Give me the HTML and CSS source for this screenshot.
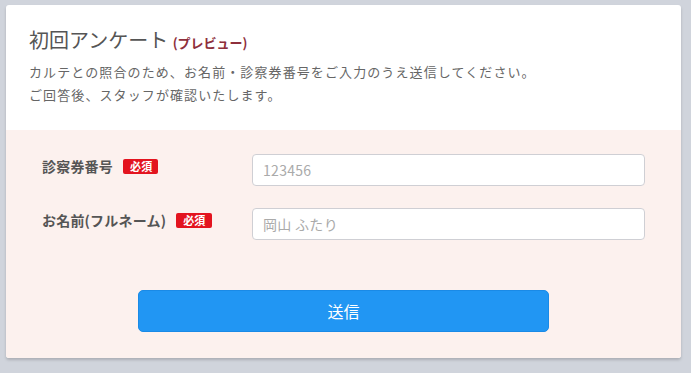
FILE: index.html
```html
<!DOCTYPE html>
<html lang="ja">
<head>
  <meta charset="UTF-8">
  <meta name="viewport" content="width=device-width, initial-scale=1.0">
  <title>初回アンケート</title>
  <link rel="stylesheet" href="styles.css">
</head>
<body>
  <div class="card">
    <div class="card-head">
      <h1 class="title">初回アンケート <span class="preview">(プレビュー)</span></h1>
      <p class="lead">カルテとの照合のため、お名前・診察券番号をご入力のうえ送信してください。<br>ご回答後、スタッフが確認いたします。</p>
    </div>
    <form class="card-form" onsubmit="return false;">
      <div class="row">
        <label class="label" for="card-no">診察券番号<span class="req">必須</span></label>
        <input class="input" id="card-no" type="text" placeholder="123456">
      </div>
      <div class="row">
        <label class="label" for="name">お名前(フルネーム)<span class="req">必須</span></label>
        <input class="input" id="name" type="text" placeholder="岡山 ふたり">
      </div>
      <div class="actions">
        <button class="submit" type="submit">送信</button>
      </div>
    </form>
  </div>
</body>
</html>
```

FILE: styles.css
```css
body {
  margin: 0;
  padding: 5px 10px 15px 6px;
  background: #d0d4dc;
  font-family: "Noto Sans CJK JP", "Noto Sans", sans-serif;
  color: #555;
}
.card {
  width: 675px;
  background: #fff;
  border-radius: 3px;
  overflow: hidden;
  box-shadow: 0 2px 3px rgba(0, 0, 0, 0.18);
}
.card-head {
  padding: 21px 23px 24px 23px;
}
.title {
  margin: 0;
  font-size: 20px;
  line-height: 28px;
  font-weight: 400;
  color: #555;
}
.preview {
  font-size: 13px;
  font-weight: 700;
  color: #8e2f3c;
}
.lead {
  margin: 3px 0 0;
  font-size: 13px;
  line-height: 23px;
  letter-spacing: 1.1px;
  color: #666;
}
.card-form {
  background: #fcf1ee;
  padding: 24px 36px 26px 36px;
}
.row {
  display: flex;
  align-items: flex-start;
  margin-bottom: 22px;
}
.label {
  width: 210px;
  flex: none;
  font-size: 14px;
  font-weight: 700;
  line-height: 24px;
  letter-spacing: 0.2px;
  color: #555;
  display: flex;
  align-items: center;
}
.req {
  margin-left: 10px;
  background: #e3141f;
  color: #fff;
  font-size: 11px;
  font-weight: 700;
  line-height: 15px;
  padding: 0 6px 0 7px;
  border-radius: 2px;
}
.input {
  flex: 1;
  box-sizing: border-box;
  height: 32px;
  margin: 0;
  padding: 0 10px;
  border: 1px solid #cfcfd4;
  border-radius: 4px;
  background: #fff;
  font-family: "Noto Sans CJK JP", "Noto Sans", sans-serif;
  font-size: 14px;
  letter-spacing: 0.3px;
  color: #555;
}
.input::placeholder {
  color: #aaa;
}
.actions {
  display: flex;
  justify-content: center;
  padding-top: 28px;
}
.submit {
  width: 411px;
  height: 42px;
  border: 1px solid #1a8ae6;
  border-radius: 5px;
  background: #2196f3;
  color: #fff;
  font-family: "Noto Sans CJK JP", "Noto Sans", sans-serif;
  font-size: 16px;
  cursor: pointer;
}
```
